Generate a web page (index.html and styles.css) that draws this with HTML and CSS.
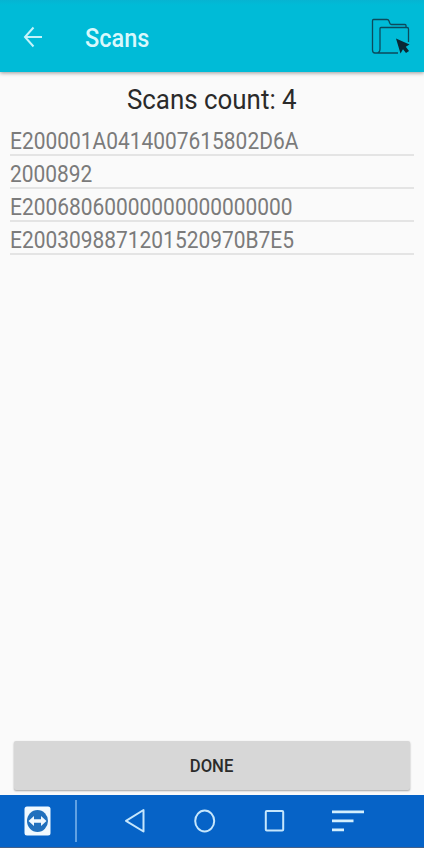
FILE: index.html
```html
<!DOCTYPE html>
<html lang="en">
<head>
    <meta charset="UTF-8">
    <meta name="viewport" content="width=device-width, initial-scale=1.0">
    <title>Scans</title>
    <link rel="stylesheet" href="styles.css">
</head>
<body>
    <header class="toolbar">
        <svg class="back" width="20" height="22" viewBox="0 0 20 22">
            <path d="M10.5 1.500L2 11l8.500 9.500M2 11h17"/>
        </svg>
        <h1><span>Scans</span></h1>
        <svg class="folder" width="40" height="40" viewBox="0 0 40 40">
            <path d="M36 10.500V8.500Q36 7.500 35 7.500H21.500Q20 7.500 19.500 5.500L19 4Q18.500 2.500 17 2.500H3.500Q2.500 2.500 2.500 4V33Q2.500 36 5 36H28M10 11.500Q10 10.500 11 10.500H37Q38.500 10.500 38.500 12V25M10 11.500V32Q10 36 6 36"/>
            <path class="cursor" d="M26 21.500L39.500 27.500L35.800 29.800L39 34L36 36L33 32.200L30.500 36.500Z"/>
        </svg>
    </header>
    <main>
        <h2><span>Scans count: 4</span></h2>
        <ul class="scans">
            <li><span>E200001A0414007615802D6A</span></li>
            <li><span>2000892</span></li>
            <li><span>E20068060000000000000000</span></li>
            <li><span>E2003098871201520970B7E5</span></li>
        </ul>
        <button type="button" class="done"><span>DONE</span></button>
    </main>
    <nav class="navbar">
        <svg width="424" height="53" viewBox="0 0 424 53">
            <rect class="tile" x="24.500" y="11.500" width="26" height="29" rx="2.500"/>
            <ellipse class="disc" cx="37.500" cy="26" rx="10.500" ry="11"/>
            <path class="tile" d="M28.500 26l5.500-5v3.200h7V21l5.500 5-5.500 5v-3.200h-7V31z"/>
            <path class="divider" d="M76 5v42"/>
            <path class="line" d="M143.500 15v21.500L126 25.800z"/>
            <ellipse class="line" cx="204.700" cy="26" rx="9.500" ry="10.500"/>
            <rect class="line" x="265.800" y="16" width="17.400" height="19.500" rx="1"/>
            <path class="bars" d="M332 16.900h32M332 25.900h21.500M332 34.900h12"/>
        </svg>
    </nav>
</body>
</html>
```
FILE: styles.css
```css
* {
    box-sizing: border-box;
    margin: 0;
    padding: 0;
}

body {
    font-family: Roboto, "Liberation Sans", sans-serif;
    display: flex;
    flex-direction: column;
    height: 100vh;
    background-color: #fafafa;
    overflow: hidden;
}

.toolbar {
    display: flex;
    align-items: center;
    height: 72px;
    padding: 1px 14px 0 23px;
    background: linear-gradient(#06b4d2, #00bbd7 5px);
    box-shadow: 0 1px 4px rgba(0, 0, 0, 0.4);
}

.toolbar svg {
    fill: none;
    stroke: #c4f3fa;
    stroke-width: 2;
}

.toolbar h1 {
    flex: 1;
    margin-left: 42px;
    padding-top: 5px;
    font-size: 25px;
    font-weight: 500;
    line-height: 30px;
    color: #d9f8fc;
}

.toolbar h1 span,
.scans span {
    display: inline-block;
    transform: scaleX(0.94);
    transform-origin: left;
}

.toolbar .folder {
    stroke: #0c4a5c;
    stroke-width: 1.3;
}

.folder .cursor {
    fill: #0b2733;
    stroke: none;
}

main {
    flex: 1;
    display: flex;
    flex-direction: column;
    padding: 10px 10px 5px;
}

h2 {
    font-size: 28px;
    font-weight: 400;
    line-height: 36px;
    text-align: center;
    color: #2a2a2a;
}

h2 span,
.done span {
    display: inline-block;
    transform: scaleX(0.925);
}

.scans {
    list-style: none;
    margin-top: 5px;
}

.scans li {
    height: 33px;
    border-bottom: 2px solid #e4e4e4;
    font-size: 23.5px;
    line-height: 36px;
    color: #7b7b7b;
    white-space: nowrap;
}

.scans span {
    transform: scaleX(0.891);
}

.done {
    height: 49px;
    margin: auto 4px 0;
    border: none;
    border-radius: 2px;
    background-color: #d7d7d7;
    box-shadow: 0 1px 2px rgba(0, 0, 0, 0.35);
    font-family: inherit;
    font-size: 18px;
    font-weight: 500;
    color: #2b2b2b;
}

.navbar {
    height: 53px;
    background-color: #0663c7;
    border-bottom: 1px solid #40608c;
}

.navbar svg {
    display: block;
}

.tile {
    fill: #f0f9ff;
}

.disc {
    fill: #2070bd;
}

.divider {
    stroke: #7fb6ec;
    stroke-width: 1.5;
}

.line {
    fill: none;
    stroke: #c5e6fc;
    stroke-width: 2;
    stroke-linejoin: round;
}

.bars {
    stroke: #d3effd;
    stroke-width: 2.6;
}
```
